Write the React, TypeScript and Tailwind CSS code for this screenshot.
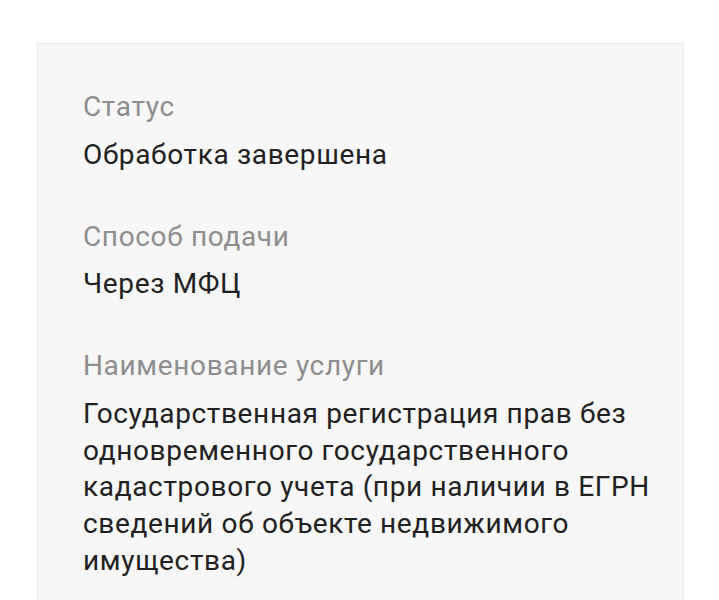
const fields = [
  { label: 'Статус', value: 'Обработка завершена' },
  { label: 'Способ подачи', value: 'Через МФЦ' },
  {
    label: 'Наименование услуги',
    value:
      'Государственная регистрация прав без одновременного государственного кадастрового учета (при наличии в ЕГРН сведений об объекте недвижимого имущества)',
  },
];

export default function App() {
  return (
    <div className="min-h-[600px] bg-white pt-[43px] pl-[37px] font-['Roboto',sans-serif]">
      <div className="w-[647px] border border-[#ebebeb] bg-[#f7f7f7] pt-[45px] pr-[30px] pb-[40px] pl-[45px]">
        <div className="flex flex-col gap-[45px]">
          {fields.map((f) => (
            <div key={f.label} className="flex flex-col gap-[11px]">
              <div className="text-[28px] leading-[36.75px] tracking-[0.65px] text-[#8e8e8e]">{f.label}</div>
              <div className="text-[28px] leading-[36.75px] tracking-[0.65px] text-[#212121]">{f.value}</div>
            </div>
          ))}
        </div>
      </div>
    </div>
  );
}
